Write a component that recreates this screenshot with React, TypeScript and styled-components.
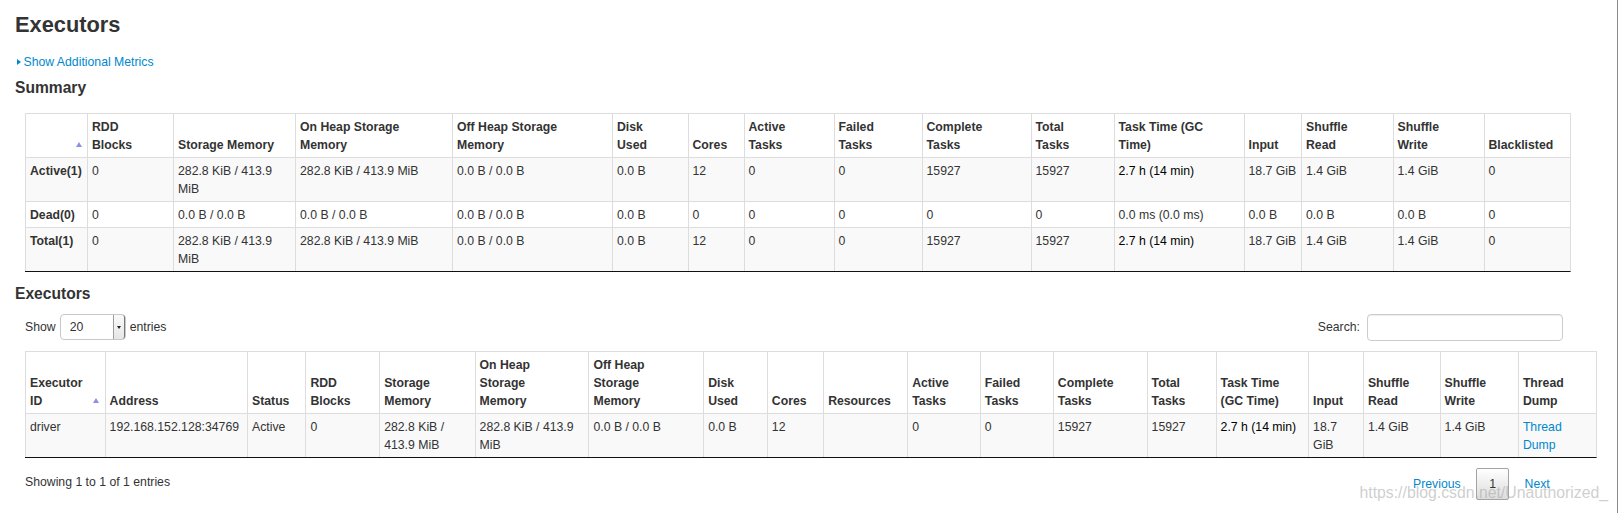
import React from "react";
import styled, { createGlobalStyle } from "styled-components";

const LINK = "#0088cc";

const GlobalStyle = createGlobalStyle`
  html, body {
    margin: 0;
    padding: 0;
    background: #fff;
  }
  body {
    font-family: "Liberation Sans", Arial, Helvetica, sans-serif;
    font-size: 12.25px;
    line-height: 18px;
    color: #333;
  }
`;

const Page = styled.div`
  position: relative;
  box-sizing: border-box;
  width: 1618px;
  height: 513px;
  padding: 13px 0 0 15px;
  border-right: 1px solid #8a8a8a;
  overflow: hidden;
`;

const Title = styled.h3`
  margin: 0;
  font-size: 21.8px;
  line-height: 24px;
  font-weight: bold;
`;

const MetricsToggle = styled.a`
  display: flex;
  align-items: center;
  margin-top: 15.5px;
  color: ${LINK};
  cursor: pointer;
`;

const Caret = styled.span`
  width: 0;
  height: 0;
  margin: 0 3px 0 1.5px;
  border-left: 4px solid ${LINK};
  border-top: 3.5px solid transparent;
  border-bottom: 3.5px solid transparent;
`;

const SectionTitle = styled.h4<{ $gap: number }>`
  margin: ${(p) => p.$gap}px 0 0;
  font-size: 15.6px;
  line-height: 20px;
  font-weight: bold;
`;

const Inset = styled.div<{ $gap: number }>`
  margin: ${(p) => p.$gap}px 0 0 10px;
`;

const Table = styled.table<{ $w: number }>`
  width: ${(p) => p.$w}px;
  table-layout: fixed;
  border-collapse: separate;
  border-spacing: 0;
  border: 1px solid #ddd;
  border-left: 0;
  border-bottom: 1px solid #111;

  tbody tr:nth-child(odd) td {
    background: #f9f9f9;
  }
`;

const Col = styled.col<{ $w: number }>`
  width: ${(p) => p.$w}px;
`;

const Th = styled.th<{ $sorted?: boolean }>`
  position: relative;
  padding: 3.5px 14px 3.5px 4px;
  border-left: 1px solid #ddd;
  text-align: left;
  vertical-align: bottom;
  font-weight: bold;

  &::after {
    content: "";
    display: ${(p) => (p.$sorted ? "block" : "none")};
    position: absolute;
    right: 5.5px;
    bottom: 10.5px;
    border-left: 3px solid transparent;
    border-right: 3px solid transparent;
    border-bottom: 5px solid #8f8fe0;
  }
`;

const Td = styled.td<{ $tone?: "label" | "time" }>`
  padding: 3.5px 4px;
  border-left: 1px solid #ddd;
  border-top: 1px solid #ddd;
  vertical-align: top;
  font-weight: ${(p) => (p.$tone === "label" ? "bold" : "normal")};
  color: ${(p) => (p.$tone === "time" ? "#000" : "#333")};
`;

const CellLink = styled.a`
  color: ${LINK};
  cursor: pointer;
`;

const Wrapper = styled.div`
  width: 1538px;
`;

const Controls = styled.div`
  display: flex;
  justify-content: space-between;
  align-items: center;
  height: 27px;
`;

const Field = styled.label`
  display: flex;
  align-items: center;
  gap: 4px;
`;

const SelectBox = styled.div`
  box-sizing: border-box;
  display: flex;
  width: 66px;
  height: 26px;
  border: 1px solid #c8c8c8;
  border-radius: 4px;
  background: #fff;
`;

const SelectValue = styled.span`
  flex: 1;
  padding-left: 9px;
  line-height: 24px;
`;

const SelectArrow = styled.span`
  display: flex;
  align-items: center;
  justify-content: center;
  width: 10px;
  border-left: 1px solid #9d9d9d;
  border-right: 1px solid #777;
  border-radius: 0 3px 3px 0;
  background: linear-gradient(#fafafa, #e6e6e6);

  &::before {
    content: "";
    border-left: 2.5px solid transparent;
    border-right: 2.5px solid transparent;
    border-top: 3px solid #222;
  }
`;

const SearchInput = styled.input`
  box-sizing: border-box;
  width: 196px;
  height: 27px;
  margin-left: 3px;
  border: 1px solid #ccc;
  border-radius: 4px;
  box-shadow: inset 0 1px 1px rgba(0, 0, 0, 0.075);
  outline: none;
`;

const TableArea = styled.div`
  margin-top: 10.5px;
`;

const Footer = styled.div`
  display: flex;
  justify-content: space-between;
  align-items: flex-start;
  margin-top: 9.5px;
`;

const Info = styled.div`
  padding-top: 4.8px;
`;

const Paginate = styled.div`
  display: flex;
`;

const PageButton = styled.a<{ $current?: boolean }>`
  margin-left: 2px;
  padding: 6.1px 12.25px;
  border: 1px solid ${(p) => (p.$current ? "#a3a3a3" : "transparent")};
  border-radius: 2px;
  color: ${(p) => (p.$current ? "#333" : LINK)};
  background: ${(p) =>
    p.$current ? "linear-gradient(to bottom, #fff 0%, #dcdcdc 100%)" : "transparent"};
  cursor: pointer;
`;

const Watermark = styled.div`
  position: absolute;
  right: 9px;
  bottom: 10px;
  font-size: 15.8px;
  line-height: 20px;
  color: rgba(165, 165, 165, 0.55);
  pointer-events: none;
`;

type Cell = string | { text: string; tone: "label" | "time" | "link" };

const active: Cell[] = [
  { text: "Active(1)", tone: "label" },
  "0",
  "282.8 KiB / 413.9 MiB",
  "282.8 KiB / 413.9 MiB",
  "0.0 B / 0.0 B",
  "0.0 B",
  "12",
  "0",
  "0",
  "15927",
  "15927",
  { text: "2.7 h (14 min)", tone: "time" },
  "18.7 GiB",
  "1.4 GiB",
  "1.4 GiB",
  "0",
];

const summary = {
  widths: [62, 86, 122, 157, 160, 75.5, 56, 90, 88, 109, 83, 130, 57.5, 91.5, 91, 86],
  headers: [
    "",
    "RDD Blocks",
    "Storage Memory",
    "On Heap Storage Memory",
    "Off Heap Storage Memory",
    "Disk Used",
    "Cores",
    "Active Tasks",
    "Failed Tasks",
    "Complete Tasks",
    "Total Tasks",
    "Task Time (GC Time)",
    "Input",
    "Shuffle Read",
    "Shuffle Write",
    "Blacklisted",
  ],
  rows: [
    active,
    [
      { text: "Dead(0)", tone: "label" },
      "0",
      "0.0 B / 0.0 B",
      "0.0 B / 0.0 B",
      "0.0 B / 0.0 B",
      "0.0 B",
      "0",
      "0",
      "0",
      "0",
      "0",
      "0.0 ms (0.0 ms)",
      "0.0 B",
      "0.0 B",
      "0.0 B",
      "0",
    ],
    [{ text: "Total(1)", tone: "label" }, ...active.slice(1)],
  ] as Cell[][],
};

const executors = {
  widths: [
    79.6, 142.4, 58.4, 73.8, 95.4, 113.9, 114.7, 63.7, 56.3, 84, 72.7, 73, 93.8, 69, 92.5,
    54.8, 76.7, 78.3, 77.9,
  ],
  headers: [
    "Executor ID",
    "Address",
    "Status",
    "RDD Blocks",
    "Storage Memory",
    "On Heap Storage Memory",
    "Off Heap Storage Memory",
    "Disk Used",
    "Cores",
    "Resources",
    "Active Tasks",
    "Failed Tasks",
    "Complete Tasks",
    "Total Tasks",
    "Task Time (GC Time)",
    "Input",
    "Shuffle Read",
    "Shuffle Write",
    "Thread Dump",
  ],
  rows: [
    [
      "driver",
      "192.168.152.128:34769",
      "Active",
      "0",
      "282.8 KiB / 413.9 MiB",
      "282.8 KiB / 413.9 MiB",
      "0.0 B / 0.0 B",
      "0.0 B",
      "12",
      "",
      "0",
      "0",
      "15927",
      "15927",
      { text: "2.7 h (14 min)", tone: "time" },
      "18.7 GiB",
      "1.4 GiB",
      "1.4 GiB",
      { text: "Thread Dump", tone: "link" },
    ],
  ] as Cell[][],
};

type TableData = { widths: number[]; headers: string[]; rows: Cell[][] };

function DataTable({ data }: { data: TableData }) {
  const total = data.widths.reduce((a, b) => a + b, 0) + 1;
  return (
    <Table $w={total}>
      <colgroup>
        {data.widths.map((w, i) => (
          <Col key={i} $w={w} />
        ))}
      </colgroup>
      <thead>
        <tr>
          {data.headers.map((h, i) => (
            <Th key={i} $sorted={i === 0}>
              {h}
            </Th>
          ))}
        </tr>
      </thead>
      <tbody>
        {data.rows.map((row, r) => (
          <tr key={r}>
            {row.map((cell, c) => {
              if (typeof cell === "string") return <Td key={c}>{cell}</Td>;
              if (cell.tone === "link")
                return (
                  <Td key={c}>
                    <CellLink>{cell.text}</CellLink>
                  </Td>
                );
              return (
                <Td key={c} $tone={cell.tone}>
                  {cell.text}
                </Td>
              );
            })}
          </tr>
        ))}
      </tbody>
    </Table>
  );
}

export default function App() {
  return (
    <>
      <GlobalStyle />
      <Page>
        <Title>Executors</Title>
        <MetricsToggle>
          <Caret />
          Show Additional Metrics
        </MetricsToggle>
        <SectionTitle $gap={7}>Summary</SectionTitle>
        <Inset $gap={15.5}>
          <DataTable data={summary} />
        </Inset>
        <SectionTitle $gap={11.6}>Executors</SectionTitle>
        <Inset $gap={10.4}>
          <Wrapper>
            <Controls>
              <Field>
                Show
                <SelectBox>
                  <SelectValue>20</SelectValue>
                  <SelectArrow />
                </SelectBox>
                entries
              </Field>
              <Field>
                Search:
                <SearchInput type="search" />
              </Field>
            </Controls>
            <TableArea>
              <DataTable data={executors} />
            </TableArea>
            <Footer>
              <Info>Showing 1 to 1 of 1 entries</Info>
              <Paginate>
                <PageButton>Previous</PageButton>
                <PageButton $current>1</PageButton>
                <PageButton>Next</PageButton>
              </Paginate>
            </Footer>
          </Wrapper>
        </Inset>
        <Watermark>https://blog.csdn.net/Unauthorized_</Watermark>
      </Page>
    </>
  );
}
